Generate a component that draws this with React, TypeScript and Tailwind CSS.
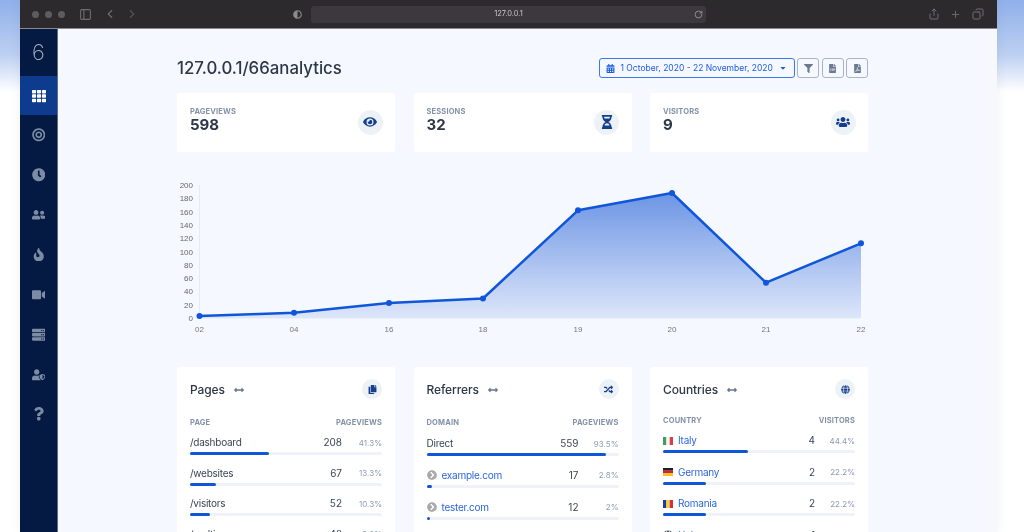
import React from 'react';
import {
  FaTh, FaBullseye, FaClock, FaUserFriends, FaFire, FaVideo, FaServer, FaUserShield, FaQuestion,
  FaCalendarAlt, FaCaretDown, FaFilter, FaFileCsv, FaFilePdf, FaEye, FaHourglassHalf, FaUsers,
  FaCopy, FaRandom, FaGlobe, FaArrowsAltH, FaChevronCircleRight, FaAdjust,
} from 'react-icons/fa';
import { LuChevronLeft, LuChevronRight, LuPanelLeft, LuRotateCw, LuShare, LuPlus, LuCopy } from 'react-icons/lu';

interface Row {
  name: string;
  count: number;
  pct: string;
  lead?: 'ref' | 'it' | 'de' | 'ro' | 'none';
  link?: boolean;
}

const navIcons = [FaBullseye, FaClock, FaUserFriends, FaFire, FaVideo, FaServer, FaUserShield, FaQuestion];

const pages: Row[] = [
  { name: '/dashboard', count: 208, pct: '41.3%' },
  { name: '/websites', count: 67, pct: '13.3%' },
  { name: '/visitors', count: 52, pct: '10.3%' },
  { name: '/realtime', count: 42, pct: '8.3%' },
];

const referrers: Row[] = [
  { name: 'Direct', count: 559, pct: '93.5%' },
  { name: 'example.com', count: 17, pct: '2.8%', lead: 'ref', link: true },
  { name: 'tester.com', count: 12, pct: '2%', lead: 'ref', link: true },
];

const countries: Row[] = [
  { name: 'Italy', count: 4, pct: '44.4%', lead: 'it', link: true },
  { name: 'Germany', count: 2, pct: '22.2%', lead: 'de', link: true },
  { name: 'Romania', count: 2, pct: '22.2%', lead: 'ro', link: true },
  { name: 'Unknown', count: 1, pct: '11.1%', lead: 'none', link: true },
];

const flagColors = {
  it: ['#3f9e57', '#f4f4f4', '#d8404a'],
  ro: ['#1d3f9a', '#f6cf3a', '#d6303c'],
};

const Lead = ({ kind }: { kind: Row['lead'] }) => {
  if (kind === 'ref') return <FaChevronCircleRight className="mr-[5px] text-[10px] text-[#a9a9ab]" />;
  if (kind === 'none') return <FaGlobe className="mr-[5px] text-[10px] text-[#555c66]" />;
  if (kind === 'de') {
    return (
      <svg width="10" height="8" className="mr-[5px]">
        <rect width="10" height="2.7" fill="#222" />
        <rect y="2.7" width="10" height="2.7" fill="#d8202a" />
        <rect y="5.4" width="10" height="2.6" fill="#f5c518" />
      </svg>
    );
  }
  if (kind === 'it' || kind === 'ro') {
    const c = flagColors[kind];
    return (
      <svg width="10" height="8" className="mr-[5px]">
        <rect width="3.4" height="8" fill={c[0]} />
        <rect x="3.4" width="3.3" height="8" fill={c[1]} />
        <rect x="6.7" width="3.3" height="8" fill={c[2]} />
      </svg>
    );
  }
  return null;
};

const StatCard = ({ label, value, icon: Icon }: { label: string; value: string; icon: React.ElementType }) => (
  <div className="flex h-[59px] w-[218px] items-center justify-between rounded-[2px] bg-white pl-[13px] pr-[12.5px]">
    <div className="-mt-[5px]">
      <div className="text-[7.5px] leading-[9px] font-bold tracking-[0.15px] text-[#8492a8] uppercase">{label}</div>
      <div className="text-[15px] leading-[18px] font-bold text-[#2d3748]">{value}</div>
    </div>
    <div className="-mt-[1px] flex h-[25px] w-[25px] items-center justify-center rounded-full bg-[#edf2f7] text-[14px] text-[#153e8f]">
      <Icon />
    </div>
  </div>
);

const ListCard = ({
  title, icon: Icon, col, value, rows, rowH, headMt, rowsMt, total,
}: {
  title: string; icon: React.ElementType; col: string; value: string; rows: Row[]; rowH: string; headMt: string; rowsMt: string; total: number;
}) => (
  <div className="h-[200px] w-[218px] rounded-[2px] bg-white px-[13px] pt-[12px]">
    <div className="flex h-[20px] items-center justify-between">
      <div className="flex items-center gap-[9px] pt-[1px]">
        <span className="text-[12px] font-medium tracking-[-0.1px] text-[#2d3748]">{title}</span>
        <FaArrowsAltH className="text-[10px] text-[#66758f]" />
      </div>
      <div className="flex h-[20px] w-[20px] items-center justify-center rounded-full bg-[#edf2f7] text-[9px] text-[#153e8f]">
        <Icon />
      </div>
    </div>
    <div className={`${headMt} flex justify-between text-[7.5px] leading-[9px] font-bold tracking-[0.15px] text-[#8492a8] uppercase`}>
      <span>{col}</span>
      <span>{value}</span>
    </div>
    <div className={rowsMt}>
      {rows.map((r) => (
        <div key={r.name} className={rowH}>
          <div className="flex h-[19px] items-center text-[10px] text-[#3a4555]">
            {r.lead && <Lead kind={r.lead} />}
            <span className={r.link ? 'tracking-[-0.25px] text-[#2b67de]' : 'tracking-[-0.25px]'}>{r.name}</span>
            <span className="ml-auto">{r.count}</span>
            <span className="w-[40px] text-right text-[8px] text-[#8f9bb0]">{r.pct}</span>
          </div>
          <div className="h-[3px] rounded-full bg-[#eff3f9]">
            <div
              className="h-[3px] rounded-full bg-[#0f56d9]"
              style={{ width: `${(r.count / total) * 100}%` }}
            />
          </div>
        </div>
      ))}
    </div>
  </div>
);

const points = [
  [22.5, 138], [117, 134.7], [212, 125], [306, 120.5], [401, 32.3], [495, 15], [589, 104.7], [684, 65.3],
];
const xLabels = ['02', '04', '16', '18', '19', '20', '21', '22'];
const yLabels = [200, 180, 160, 140, 120, 100, 80, 60, 40, 20, 0];

const Chart = () => {
  const line = points.map((p) => p.join(',')).join(' ');
  return (
    <svg width="691" height="160" className="mt-[26px] block" style={{ fontFamily: 'Liberation Sans, sans-serif' }}>
      <defs>
        <linearGradient id="area" x1="0" y1="15" x2="0" y2="140" gradientUnits="userSpaceOnUse">
          <stop offset="0" stopColor="#6c95e4" />
          <stop offset="1" stopColor="#dde6fa" />
        </linearGradient>
      </defs>
      <line x1="22.5" y1="7" x2="22.5" y2="140" stroke="#e6eaf3" />
      <line x1="22.5" y1="140" x2="684" y2="140" stroke="#e3e8f3" />
      {yLabels.map((v, i) => (
        <text key={v} x="16" y={10 + i * 13.3} textAnchor="end" fontSize="8" fill="#666">{v}</text>
      ))}
      {xLabels.map((v, i) => (
        <text key={v} x={points[i][0]} y="154" textAnchor="middle" fontSize="8" fill="#777">{v}</text>
      ))}
      <polygon points={`22.5,140 ${line} 684,140`} fill="url(#area)" />
      <polyline points={line} fill="none" stroke="#0f56d9" strokeWidth="2.5" strokeLinejoin="round" />
      {points.map((p) => (
        <circle key={p[0]} cx={p[0]} cy={p[1]} r="3" fill="#0f56d9" />
      ))}
    </svg>
  );
};

export default function App() {
  return (
    <div className="h-[532px] w-[1024px] overflow-hidden bg-[linear-gradient(#8fb0ea_0,#bdd0f2_55px,#ffffff_92px)] pl-[20px] font-['Inter',sans-serif] blur-[0.45px]">
      <div className="flex h-full w-[977px] flex-col shadow-[0_0_12px_rgba(0,0,0,0.06)]">
        {/* browser bar */}
        <div className="flex h-[29px] shrink-0 items-center border-b border-[#8b898c] bg-[#2d2a2e] pl-[12px] text-[#6f6c70]">
          <div className="flex gap-[6px]">
            <span className="h-[7px] w-[7px] rounded-full bg-[#5f5c60]" />
            <span className="h-[7px] w-[7px] rounded-full bg-[#5f5c60]" />
            <span className="h-[7px] w-[7px] rounded-full bg-[#5f5c60]" />
          </div>
          <LuPanelLeft className="ml-[14px] text-[13px]" />
          <LuChevronLeft className="ml-[11px] text-[14px]" />
          <LuChevronRight className="ml-[8px] text-[14px] text-[#565357]" />
          <FaAdjust className="ml-[154px] text-[9px] text-[#8d8a8e]" />
          <div className="relative ml-[9px] flex h-[17px] w-[395px] items-center justify-center rounded-[3px] bg-[#3c383d] text-[7.5px] text-[#c9c7ca]">
            127.0.0.1
            <LuRotateCw className="absolute right-[3px] text-[9px] text-[#a5a2a6]" />
          </div>
          <LuShare className="ml-[222px] text-[12px]" />
          <LuPlus className="ml-[10px] text-[11px]" />
          <LuCopy className="ml-[11px] -scale-x-100 text-[12px]" />
        </div>

        <div className="flex min-h-0 flex-1">
          {/* sidebar */}
          <div className="w-[37px] shrink-0 bg-[#041a42]">
            <div className="flex h-[47px] items-center justify-center text-[22px] font-extralight text-[#a9b2c4]">6</div>
            <div className="flex h-[39px] items-center justify-center bg-[#0d3b8e] text-[14px] text-white">
              <FaTh />
            </div>
            {navIcons.map((Icon, i) => (
              <div key={i} className="flex h-[39.9px] items-center justify-center text-[13.5px] text-[#7d8ca5]">
                <Icon />
              </div>
            ))}
          </div>

          {/* main */}
          <div className="flex min-w-0 flex-1 border-l border-[#5c6a85] bg-[#f5f8ff]">
            <div className="ml-[119px] w-[691px] shrink-0">
              <div className="flex h-[64px] items-center justify-between pt-[14px]">
                <h1 className="pt-[2px] text-[16.8px] font-medium text-[#2d3748]">127.0.0.1/66analytics</h1>
                <div className="flex items-center gap-[2.5px]">
                  <div className="flex h-[20px] w-[196px] items-center rounded-[3px] border border-[#3c78ea] pl-[6px] text-[8.5px] text-[#1c5be0]">
                    <FaCalendarAlt className="mr-[6px] text-[9px]" />
                    1 October, 2020 - 22 November, 2020
                    <FaCaretDown className="ml-auto mr-[7px] text-[8px]" />
                  </div>
                  {[FaFilter, FaFileCsv, FaFilePdf].map((Icon, i) => (
                    <div key={i} className="flex h-[20px] w-[22px] items-center justify-center rounded-[3px] border border-[#a9b4c6] text-[9px] text-[#6b7a90]">
                      <Icon />
                    </div>
                  ))}
                </div>
              </div>

              <div className="flex justify-between">
                <StatCard label="Pageviews" value="598" icon={FaEye} />
                <StatCard label="Sessions" value="32" icon={FaHourglassHalf} />
                <StatCard label="Visitors" value="9" icon={FaUsers} />
              </div>

              <Chart />

              <div className="mt-[29px] flex justify-between">
                <ListCard title="Pages" icon={FaCopy} col="Page" value="Pageviews" rows={pages} rowH="h-[30.5px]" headMt="mt-[19px]" rowsMt="mt-[6px]" total={503.6} />
                <ListCard title="Referrers" icon={FaRandom} col="Domain" value="Pageviews" rows={referrers} rowH="h-[31.8px]" headMt="mt-[19px]" rowsMt="mt-[7px]" total={598} />
                <ListCard title="Countries" icon={FaGlobe} col="Country" value="Visitors" rows={countries} rowH="h-[31.6px]" headMt="mt-[17px]" rowsMt="mt-[6px]" total={9} />
              </div>
            </div>
            <div className="ml-auto w-[9px] bg-[#f7f8fb]" />
          </div>
        </div>
      </div>
    </div>
  );
}
